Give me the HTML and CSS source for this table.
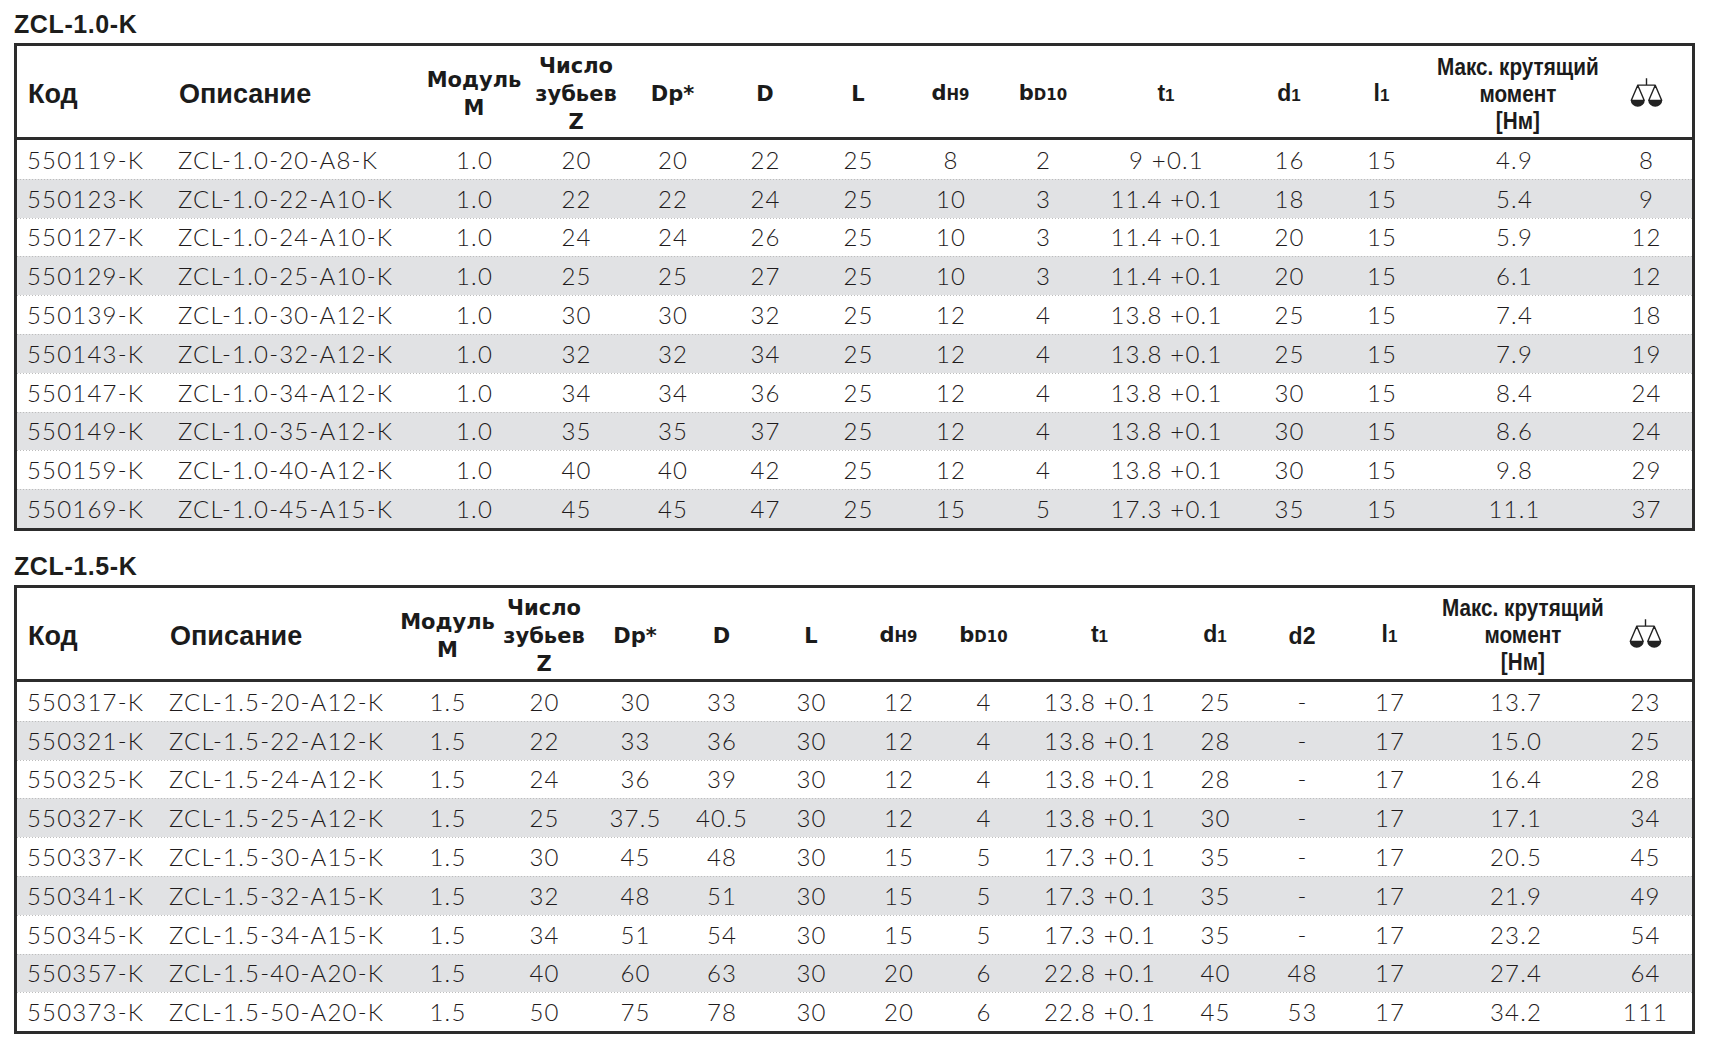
FILE: index.html
```html
<!DOCTYPE html>
<html lang="ru">
<head>
<meta charset="utf-8">
<title>ZCL-K</title>
<link rel="stylesheet" href="styles.css">
</head>
<body>
<section class="block">
  <h2 class="title">ZCL-1.0-K</h2>
  <div class="tbl tbl-a">
    <div class="hrow">
      <span class="h-lg">Код</span>
      <span class="h-lg">Описание</span>
      <span>Модуль<br>M</span>
      <span>Число<br>зубьев<br>Z</span>
      <span>Dp*</span>
      <span>D</span>
      <span>L</span>
      <span>d<small>H9</small></span>
      <span>b<small>D10</small></span>
      <span class="h-cond">t<small>1</small></span>
      <span class="h-cond">d<small>1</small></span>
      <span class="h-cond">l<small>1</small></span>
      <span class="h-nar"><span class="sq">Макс. крутящий<br>момент<br>[Нм]</span></span>
      <span class="icon"><svg viewBox="0 0 30 30" width="35" height="35"><path d="M15 1V7M7.5 7H22.5M7.5 7L2 20H13ZM22.5 7L17 20H28Z" fill="none" stroke="#222" stroke-width="1.2" stroke-linejoin="round"/><path d="M1.5 20A6 5.5 0 0 0 13.5 20ZM16.5 20A6 5.5 0 0 0 28.5 20Z" fill="#222"/></svg></span>
    </div>
    <div class="row"><span class="l">550119-K</span><span class="l">ZCL-1.0-20-A8-K</span><span>1.0</span><span>20</span><span>20</span><span>22</span><span>25</span><span>8</span><span>2</span><span>9 +0.1</span><span>16</span><span>15</span><span>4.9</span><span>8</span></div>
    <div class="row"><span class="l">550123-K</span><span class="l">ZCL-1.0-22-A10-K</span><span>1.0</span><span>22</span><span>22</span><span>24</span><span>25</span><span>10</span><span>3</span><span>11.4 +0.1</span><span>18</span><span>15</span><span>5.4</span><span>9</span></div>
    <div class="row"><span class="l">550127-K</span><span class="l">ZCL-1.0-24-A10-K</span><span>1.0</span><span>24</span><span>24</span><span>26</span><span>25</span><span>10</span><span>3</span><span>11.4 +0.1</span><span>20</span><span>15</span><span>5.9</span><span>12</span></div>
    <div class="row"><span class="l">550129-K</span><span class="l">ZCL-1.0-25-A10-K</span><span>1.0</span><span>25</span><span>25</span><span>27</span><span>25</span><span>10</span><span>3</span><span>11.4 +0.1</span><span>20</span><span>15</span><span>6.1</span><span>12</span></div>
    <div class="row"><span class="l">550139-K</span><span class="l">ZCL-1.0-30-A12-K</span><span>1.0</span><span>30</span><span>30</span><span>32</span><span>25</span><span>12</span><span>4</span><span>13.8 +0.1</span><span>25</span><span>15</span><span>7.4</span><span>18</span></div>
    <div class="row"><span class="l">550143-K</span><span class="l">ZCL-1.0-32-A12-K</span><span>1.0</span><span>32</span><span>32</span><span>34</span><span>25</span><span>12</span><span>4</span><span>13.8 +0.1</span><span>25</span><span>15</span><span>7.9</span><span>19</span></div>
    <div class="row"><span class="l">550147-K</span><span class="l">ZCL-1.0-34-A12-K</span><span>1.0</span><span>34</span><span>34</span><span>36</span><span>25</span><span>12</span><span>4</span><span>13.8 +0.1</span><span>30</span><span>15</span><span>8.4</span><span>24</span></div>
    <div class="row"><span class="l">550149-K</span><span class="l">ZCL-1.0-35-A12-K</span><span>1.0</span><span>35</span><span>35</span><span>37</span><span>25</span><span>12</span><span>4</span><span>13.8 +0.1</span><span>30</span><span>15</span><span>8.6</span><span>24</span></div>
    <div class="row"><span class="l">550159-K</span><span class="l">ZCL-1.0-40-A12-K</span><span>1.0</span><span>40</span><span>40</span><span>42</span><span>25</span><span>12</span><span>4</span><span>13.8 +0.1</span><span>30</span><span>15</span><span>9.8</span><span>29</span></div>
    <div class="row"><span class="l">550169-K</span><span class="l">ZCL-1.0-45-A15-K</span><span>1.0</span><span>45</span><span>45</span><span>47</span><span>25</span><span>15</span><span>5</span><span>17.3 +0.1</span><span>35</span><span>15</span><span>11.1</span><span>37</span></div>
  </div>
</section>
<section class="block">
  <h2 class="title">ZCL-1.5-K</h2>
  <div class="tbl tbl-b">
    <div class="hrow">
      <span class="h-lg">Код</span>
      <span class="h-lg">Описание</span>
      <span>Модуль<br>M</span>
      <span>Число<br>зубьев<br>Z</span>
      <span>Dp*</span>
      <span>D</span>
      <span>L</span>
      <span>d<small>H9</small></span>
      <span>b<small>D10</small></span>
      <span class="h-cond">t<small>1</small></span>
      <span class="h-cond">d<small>1</small></span>
      <span class="h-cond">d2</span>
      <span class="h-cond">l<small>1</small></span>
      <span class="h-nar"><span class="sq">Макс. крутящий<br>момент<br>[Нм]</span></span>
      <span class="icon"><svg viewBox="0 0 30 30" width="35" height="35"><path d="M15 1V7M7.5 7H22.5M7.5 7L2 20H13ZM22.5 7L17 20H28Z" fill="none" stroke="#222" stroke-width="1.2" stroke-linejoin="round"/><path d="M1.5 20A6 5.5 0 0 0 13.5 20ZM16.5 20A6 5.5 0 0 0 28.5 20Z" fill="#222"/></svg></span>
    </div>
    <div class="row"><span class="l">550317-K</span><span class="l">ZCL-1.5-20-A12-K</span><span>1.5</span><span>20</span><span>30</span><span>33</span><span>30</span><span>12</span><span>4</span><span>13.8 +0.1</span><span>25</span><span>-</span><span>17</span><span>13.7</span><span>23</span></div>
    <div class="row"><span class="l">550321-K</span><span class="l">ZCL-1.5-22-A12-K</span><span>1.5</span><span>22</span><span>33</span><span>36</span><span>30</span><span>12</span><span>4</span><span>13.8 +0.1</span><span>28</span><span>-</span><span>17</span><span>15.0</span><span>25</span></div>
    <div class="row"><span class="l">550325-K</span><span class="l">ZCL-1.5-24-A12-K</span><span>1.5</span><span>24</span><span>36</span><span>39</span><span>30</span><span>12</span><span>4</span><span>13.8 +0.1</span><span>28</span><span>-</span><span>17</span><span>16.4</span><span>28</span></div>
    <div class="row"><span class="l">550327-K</span><span class="l">ZCL-1.5-25-A12-K</span><span>1.5</span><span>25</span><span>37.5</span><span>40.5</span><span>30</span><span>12</span><span>4</span><span>13.8 +0.1</span><span>30</span><span>-</span><span>17</span><span>17.1</span><span>34</span></div>
    <div class="row"><span class="l">550337-K</span><span class="l">ZCL-1.5-30-A15-K</span><span>1.5</span><span>30</span><span>45</span><span>48</span><span>30</span><span>15</span><span>5</span><span>17.3 +0.1</span><span>35</span><span>-</span><span>17</span><span>20.5</span><span>45</span></div>
    <div class="row"><span class="l">550341-K</span><span class="l">ZCL-1.5-32-A15-K</span><span>1.5</span><span>32</span><span>48</span><span>51</span><span>30</span><span>15</span><span>5</span><span>17.3 +0.1</span><span>35</span><span>-</span><span>17</span><span>21.9</span><span>49</span></div>
    <div class="row"><span class="l">550345-K</span><span class="l">ZCL-1.5-34-A15-K</span><span>1.5</span><span>34</span><span>51</span><span>54</span><span>30</span><span>15</span><span>5</span><span>17.3 +0.1</span><span>35</span><span>-</span><span>17</span><span>23.2</span><span>54</span></div>
    <div class="row"><span class="l">550357-K</span><span class="l">ZCL-1.5-40-A20-K</span><span>1.5</span><span>40</span><span>60</span><span>63</span><span>30</span><span>20</span><span>6</span><span>22.8 +0.1</span><span>40</span><span>48</span><span>17</span><span>27.4</span><span>64</span></div>
    <div class="row"><span class="l">550373-K</span><span class="l">ZCL-1.5-50-A20-K</span><span>1.5</span><span>50</span><span>75</span><span>78</span><span>30</span><span>20</span><span>6</span><span>22.8 +0.1</span><span>45</span><span>53</span><span>17</span><span>34.2</span><span>111</span></div>
  </div>
</section>
</body>
</html>
```

FILE: styles.css
```css
html, body {
  margin: 0;
  background: #ffffff;
}

body {
  padding: 0 0 0 14px;
  font-family: "Lato", "Roboto", "Liberation Sans", sans-serif;
  color: #1f1b1c;
}

.block + .block {
  margin-top: 11px;
}

.title {
  margin: 0 0 7px;
  padding-top: 12px;
  font: 700 25px/24px "Liberation Sans", Arial, sans-serif;
  letter-spacing: 0.6px;
  color: #1d1d1b;
}

.tbl {
  width: 1675px;
  border: 3px solid #2c2c2c;
}

.tbl-a {
  --cols: 151px 255px 102px 102px 91px 94px 92px 93px 92px 154px 92px 93px 172px 92px;
}

.tbl-b {
  --cols: 142px 240px 97px 96px 86px 87px 92px 83px 87px 145px 86px 88px 87px 165px 94px;
}

.hrow,
.row {
  display: grid;
  grid-template-columns: var(--cols);
  align-items: center;
}

.hrow {
  box-sizing: border-box;
  height: 94px;
  padding-top: 5px;
  border-bottom: 3px solid #2c2c2c;
  font: 700 21px/28px "DejaVu Sans", "Liberation Sans", sans-serif;
  text-align: center;
  color: #1b1b1b;
}

.hrow > span {
  white-space: nowrap;
}

.hrow .h-lg {
  font-family: "Liberation Sans", Arial, sans-serif;
  font-size: 27px;
  text-align: left;
  padding-left: 11px;
}

.hrow .h-cond {
  font-family: "Liberation Sans", Arial, sans-serif;
  font-size: 23px;
}

.hrow .h-nar {
  font-family: "Liberation Sans", Arial, sans-serif;
  font-size: 23px;
  line-height: 27px;
}

.hrow .sq {
  display: inline-block;
  transform: scaleX(0.9);
}

.hrow small {
  font-size: 15px;
}

.hrow .h-cond small {
  font-size: 17px;
}

.icon {
  display: flex;
  justify-content: center;
}

.row {
  height: 38.8px;
  font-size: 24px;
  font-weight: 300;
  letter-spacing: 1.2px;
  text-align: center;
  white-space: nowrap;
  background-image: linear-gradient(90deg, #bdbdbd 50%, transparent 50%);
  background-size: 3px 1px;
  background-repeat: repeat-x;
  background-position: 0 0;
}

.hrow + .row {
  background-image: none;
}

.row:nth-child(odd) {
  background-color: #e1e2e4;
}

.row > span {
  padding-left: 1px;
}

.row > .l {
  text-align: left;
  padding-left: 10px;
}
```
